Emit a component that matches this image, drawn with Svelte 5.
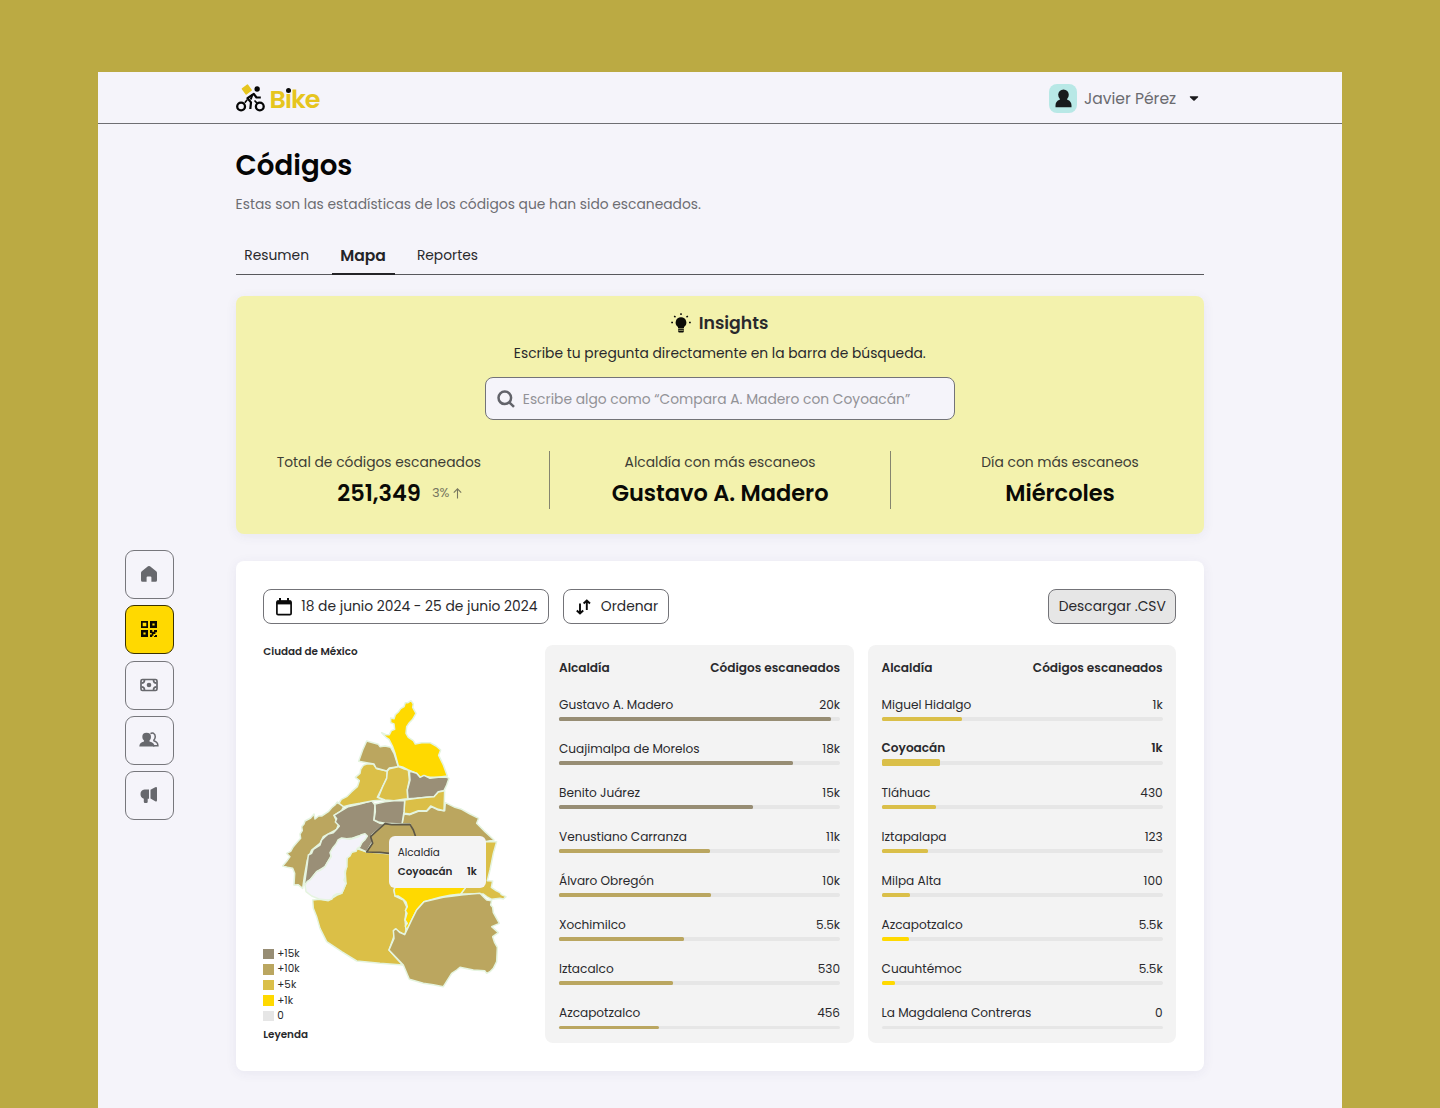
<script>
  const left = [
    { name: 'Gustavo A. Madero', value: '20k', pct: 96.8, tone: 'taupe' },
    { name: 'Cuajimalpa de Morelos', value: '18k', pct: 83.3, tone: 'taupe' },
    { name: 'Benito Juárez', value: '15k', pct: 69, tone: 'taupe' },
    { name: 'Venustiano Carranza', value: '11k', pct: 53.8, tone: 'khaki' },
    { name: 'Álvaro Obregón', value: '10k', pct: 54.2, tone: 'khaki' },
    { name: 'Xochimilco', value: '5.5k', pct: 44.5, tone: 'khaki' },
    { name: 'Iztacalco', value: '530', pct: 40.6, tone: 'khaki' },
    { name: 'Azcapotzalco', value: '456', pct: 35.5, tone: 'khaki' }
  ];
  const right = [
    { name: 'Miguel Hidalgo', value: '1k', pct: 28.5, tone: 'gold' },
    { name: 'Coyoacán', value: '1k', pct: 20.7, tone: 'gold', active: true },
    { name: 'Tláhuac', value: '430', pct: 19.5, tone: 'gold' },
    { name: 'Iztapalapa', value: '123', pct: 16.4, tone: 'gold' },
    { name: 'Milpa Alta', value: '100', pct: 10.1, tone: 'gold' },
    { name: 'Azcapotzalco', value: '5.5k', pct: 9.6, tone: 'yellow' },
    { name: 'Cuauhtémoc', value: '5.5k', pct: 4.8, tone: 'yellow' },
    { name: 'La Magdalena Contreras', value: '0', pct: 0, tone: 'yellow' }
  ];
  const panels = [left, right];
  const legend = [
    { label: '+15k', tone: 'taupe' },
    { label: '+10k', tone: 'khaki' },
    { label: '+5k', tone: 'gold' },
    { label: '+1k', tone: 'yellow' },
    { label: '0', tone: 'none' }
  ];
  const regions = [
    { tone: 'khaki', d: '212,332 205,340 202,336 195,345 185,353 175,365 155,378 146,378 135,387 132,372 122,384 105,393 102,402 95,410 97,422 90,432 92,445 80,458 70,470 62,484 50,490 60,500 50,514 38,528 52,532 68,535 74,550 72,585 84,584 98,595 103,560 112,510 125,480 150,460 160,440 200,418 205,405 192,376 215,362 222,348' },
    { tone: 'gold', d: '262,476 290,485 360,492 390,560 372,600 375,618 400,630 410,650 405,690 408,720 405,735 375,718 370,745 357,780 375,800 398,825 330,820 260,813 215,785 170,755 150,715 140,680 130,655 128,630 150,628 175,632 200,616 215,610 228,580 226,550 232,500 245,487' },
    { tone: 'khaki', d: '396,402 402,372 420,374 445,364 470,364 484,350 505,360 524,362 526,338 555,352 575,358 600,372 626,385 620,400 645,425 672,450 640,456 600,480 440,460 420,402' },
    { tone: 'gold', d: '630,455 680,455 670,490 660,540 652,572 668,573 664,592 678,602 690,608 694,614 708,620 700,627 690,625 665,628 650,620 640,612 600,612 572,612 585,595 600,560' },
    { tone: 'yellow', d: '372,600 380,580 590,580 585,595 572,612 540,616 510,622 462,635 440,660 425,690 410,722 406,708 412,700 405,690 411,670 406,662 412,650 408,636 400,628 384,618 375,618' },
    { tone: 'khaki', d: '462,635 520,622 580,614 630,610 640,620 650,630 665,632 662,645 668,652 670,668 688,700 665,710 685,728 668,740 674,758 682,772 680,815 670,835 660,845 650,850 644,842 610,840 570,832 560,840 545,850 520,890 490,884 460,880 418,868 400,825 357,780 372,745 370,722 378,716 390,728 404,734 425,690 440,660' },
    { tone: 'taupe', d: '192,376 215,362 235,350 270,342 305,332 315,345 312,390 330,400 345,402 325,418 305,435 308,455 290,486 264,474 285,445 265,438 245,445 215,448 205,460 185,480 182,500 165,530 140,545 120,570 103,585 108,550 112,520 115,495 125,490 130,478 150,465 155,450 165,440 175,432 190,428 200,418 208,408 196,396 200,386' },
    { tone: 'clear', d: '105,585 112,574 122,568 130,558 140,545 152,540 165,530 172,518 184,500 180,488 188,474 198,462 204,450 215,444 240,448 265,440 272,435 285,431 292,438 284,450 275,458 270,470 262,475 258,484 245,487 240,498 230,505 231,530 224,545 226,560 222,570 228,580 220,600 215,610 200,612 190,618 185,628 175,630 150,628 125,618 108,605' },
    { tone: 'gold', d: '280,226 290,222 310,222 320,236 352,243 350,265 338,290 322,322 345,330 310,332 270,340 240,345 220,350 207,340 214,328 230,320 245,305 262,290 268,272 256,262 270,250 272,238' },
    { tone: 'khaki', d: '290,153 325,163 330,170 345,168 362,172 372,190 385,230 358,234 350,243 318,234 312,222 290,218 266,214 278,180' },
    { tone: 'gold', d: '352,243 358,236 385,230 400,236 415,240 418,270 412,300 413,326 400,328 372,332 345,330 325,322 338,290 350,265' },
    { tone: 'yellow', d: '335,128 348,134 358,134 364,122 374,118 372,102 362,98 362,84 372,86 376,74 385,66 392,56 402,50 406,38 414,38 423,32 430,42 428,52 438,70 428,88 418,98 410,110 408,130 415,142 430,152 436,162 455,158 480,158 498,168 512,180 506,196 520,225 532,258 505,262 480,262 462,258 450,262 440,250 415,240 400,232 385,228 375,190 368,170 357,148 348,142' },
    { tone: 'taupe', d: '418,243 440,250 450,262 462,256 480,265 505,262 530,262 537,265 530,285 522,302 505,305 492,320 470,322 440,325 414,326 412,300 420,270' },
    { tone: 'gold', d: '404,330 440,325 470,322 492,320 505,306 524,302 522,362 505,358 482,348 470,362 445,362 420,372 402,370' },
    { tone: 'taupe', d: '315,342 345,335 372,332 404,332 402,365 396,402 345,400 325,396 312,390 316,365' },
    { tone: 'khaki', d: '345,401 365,404 420,403 430,420 437,440 437,492 358,490 330,487 290,486 308,460 302,440 318,425', focus: true }
  ];
</script>

<div class="frame">
  <header>
    <div class="logo">
      <svg width="30" height="28" viewBox="0 0 30 28" fill="none" stroke="#050505">
        <rect x="-3.9" y="-3.9" width="7.8" height="7.800" rx=".8" transform="translate(10.800 5.500) rotate(-36)" fill="#e6c51e" stroke="none" />
        <circle cx="5.100" cy="22.500" r="3.900" stroke-width="2.300" />
        <circle cx="23.800" cy="22.500" r="3.900" stroke-width="2.300" />
        <circle cx="21.100" cy="5" r="2.700" fill="#050505" stroke="none" />
        <path d="M24.800 13.500h-4.300l-2.700-3.700-6.300 4.400 3.500 4.200-.7 6.600" stroke-width="2.200" stroke-linejoin="round" />
        <path d="M16.500 10.500l-1.800 5" stroke-width="2" />
        <path d="M11.200 15.800l-2.400 3M18.500 16.500l2.600 2.600" stroke-width="1.600" />
      </svg>
      <span class="word">B<span class="i">ı<i></i></span>ke</span>
    </div>
    <div class="user">
      <span class="avatar">
        <svg width="17" height="19" viewBox="0 0 17 19" fill="#181a1c"><circle cx="8.5" cy="5.7" r="5.3" /><path d="M4.800 8h7.400v2.700c3 .8 4.300 3 4.300 5.700v1.800H.5v-1.800c0-2.700 1.300-4.900 4.300-5.700z" /></svg>
      </span>
      <span class="uname">Javier Pérez</span>
      <svg width="10" height="5" viewBox="0 0 10 5"><path d="M1.200.3h7.600q.8.2.2.9L5.700 4.500q-.7.600-1.400 0L1 1.200Q.4.500 1.200.3z" fill="#1a1a1c" /></svg>
    </div>
  </header>

  <div class="body">
    <nav>
      <button aria-label="Inicio"><svg width="18" height="18" viewBox="0 0 18 18" fill="#67686d"><path d="M8 1.300q1-.8 2 0l6.200 5q.8.600.8 1.600v7.300q0 1.600-1.600 1.600h-4V12.500q0-1-1-1H7.600q-1 0-1 1v4.300h-4Q1 16.800 1 15.200V7.900q0-1 .8-1.600z" /></svg></button>
      <button class="on" aria-label="Códigos"><svg width="16" height="16" viewBox="0 0 16 16" fill="#0c0a00" fill-rule="evenodd"><path d="M0 0h7v7H0zM1.700 1.700v3.600h3.600V1.700zM9 0h7v7H9zM11.400 2.400v2.200h2.200V2.400zM0 9h7v7H0zM2.400 11.400v2.200h2.200v-2.200z" /><path d="M9 9h2.300v1.800H13V9h3v2.200h-1.600V13h-2v1.700h-1.200V16H9v-2.400h1.700V12H9zM14 14h2v2h-3v-1h1z" /></svg></button>
      <button aria-label="Pagos"><svg width="18" height="14" viewBox="0 0 18 14" fill="none" stroke="#67686d" stroke-width="1.700"><rect x="1" y="1.500" width="16" height="11" rx="1.500" /><circle cx="9" cy="7" r="2.300" fill="#67686d" stroke="none" /><path d="M1.500 5.200q3 0 3-3.200M16.500 5.200q-3 0-3-3.200M1.500 8.800q3 0 3 3.200M16.500 8.800q-3 0-3 3.200" stroke-width="1.700" /></svg></button>
      <button aria-label="Usuarios"><svg width="20" height="16" viewBox="0 0 20 16" fill="#67686d"><path d="M11.500 1.600q1.400-1 3-.3 2 1 1.700 3.800-.2 1.800-1.300 2.900v.8q4 1.300 4 4.900H14" fill="none" stroke="#67686d" stroke-width="1.500" /><path d="M7.500.8q4.500 0 4.500 4.200 0 2.300-1.500 3.600v1q5 1.200 5 5H.3q0-3.800 4.700-5v-1Q3.300 7.300 3.300 5q0-4.200 4.200-4.200z" /></svg></button>
      <button aria-label="Campañas"><svg width="18" height="18" viewBox="0 0 18 18" fill="#67686d"><path d="M9 3.500v9.300H7.700v3q0 1.200-1.200 1.200H5q-1.200 0-1.200-1.200v-3Q.5 11.800.5 8.100q0-4 4-4.600zM10.500 3.800l4.700-2.600q1.800-.8 1.800 1v12q0 1.800-1.800 1l-4.700-2.800z" /></svg></button>
    </nav>

    <main>
      <h1>Códigos</h1>
      <p class="lead">Estas son las estadísticas de los códigos que han sido escaneados.</p>
      <div class="tabs">
        <span class="tab t1">Resumen</span>
        <span class="tab sel">Mapa</span>
        <span class="tab t3">Reportes</span>
      </div>

      <section class="insights">
        <h2>
          <svg width="20" height="20" viewBox="0 0 20 20" fill="#0b0b08"><path d="M10 4.200a5.300 5.300 0 0 1 3 9.700V15H7v-1.100a5.300 5.300 0 0 1 3-9.700zM7.200 15.500h5.600v3q0 1-1 1H8.200q-1 0-1-1z" /><path d="M7.500 17.300h5" stroke="#c4c389" stroke-width=".8" /><path d="M10 .3v1.800M3.200 3l1.300 1.300M16.800 3l-1.300 1.300M.2 9.500H2M18 9.500h1.800" stroke="#0b0b08" stroke-width="1.500" /></svg>
          <span>Insights</span>
        </h2>
        <p class="hint">Escribe tu pregunta directamente en la barra de búsqueda.</p>
        <div class="search">
          <svg width="18" height="18" viewBox="0 0 18 18" fill="none" stroke="#62636a" stroke-width="2.500"><circle cx="7.800" cy="7.800" r="6.300" /><path d="M12.300 12.300l4.700 4.500" /></svg>
          <span>Escribe algo como “Compara A. Madero con Coyoacán”</span>
        </div>
        <div class="stats">
          <div class="stat">
            <span class="label">Total de códigos escaneados</span>
            <div class="big"><b class="num">251,349</b><em>3%</em><svg width="9" height="11" viewBox="0 0 9 11" fill="none" stroke="#77775f" stroke-width="1.100"><path d="M4.500 10.500V1M.8 4.700l3.700-3.900 3.700 3.900" /></svg></div>
          </div>
          <div class="stat">
            <span class="label l2">Alcaldía con más escaneos</span>
            <div class="big"><b class="gam">Gustavo A. Madero</b></div>
          </div>
          <div class="stat">
            <span class="label l3">Día con más escaneos</span>
            <div class="big"><b class="day">Miércoles</b></div>
          </div>
        </div>
      </section>

      <section class="card">
        <div class="tools">
          <button class="date">
            <svg width="16" height="18" viewBox="0 0 16 18" fill="none" stroke="#0a0a0a" stroke-width="1.700"><rect x=".9" y="3" width="14.200" height="13.600" rx="1.200" /><path d="M1 4.500h14" stroke-width="3.800" /><path d="M4 0v3M12 0v3" stroke-width="2" /></svg>
            <span>18 de junio 2024 - 25 de junio 2024</span>
          </button>
          <button class="sort">
            <svg width="15" height="16" viewBox="0 0 15 16" fill="none" stroke="#0a0a0a" stroke-width="1.900"><path d="M4 4.500v10M.8 11.500l3.200 3 3.200-3M10.800 11V1.500M7.600 4.500l3.200-3 3.200 3" /></svg>
            <span>Ordenar</span>
          </button>
          <button class="csv"><span>Descargar .CSV</span></button>
        </div>
        <div class="cols">
          <div class="mapcol">
            <h3>Ciudad de México</h3>
            <div class="map">
              <svg width="250" height="310" viewBox="0 0 750 930">
                {#each regions as r}
                  <polygon class="region {r.tone}" class:focus={r.focus} points={r.d} />
                {/each}
              </svg>
              <div class="tip">
                <span>Alcaldía</span>
                <div><b>Coyoacán</b><b>1k</b></div>
              </div>
            </div>
            <div class="legend">
              {#each legend as l}
                <div class="key"><i class={l.tone}></i><span>{l.label}</span></div>
              {/each}
              <b>Leyenda</b>
            </div>
          </div>
          {#each panels as rows}
            <div class="panel">
              <div class="head"><span>Alcaldía</span><span>Códigos escaneados</span></div>
              {#each rows as r}
                <div class="row" class:active={r.active}>
                  <div class="line"><span>{r.name}</span><span>{r.value}</span></div>
                  <div class="track"><div class="bar {r.tone}" style:width="{r.pct}%"></div></div>
                </div>
              {/each}
            </div>
          {/each}
        </div>
      </section>
    </main>
  </div>
</div>

<style>
  :global(body) {
    background: #bbaa43;
    font-family: Poppins, Inter, sans-serif;
    font-feature-settings: 'cv11';
    color: #29292c;
  }
  :global(#app) { height: 1108px; overflow: hidden; }
  * { box-sizing: border-box; }
  h1, h2, h3, p { margin: 0; }
  svg { display: block; flex: none; }
  span, b, h1, h3, p { white-space: nowrap; }
  button { font: inherit; color: inherit; font-feature-settings: inherit; padding: 0; }
  .frame { margin: 72px 98px 0; height: 1036px; background: #f5f4fa; }
  header {
    height: 52px; padding: 1px 138px 0 137.600px; border-bottom: 1px solid #6e6e72;
    display: flex; justify-content: space-between; align-items: center;
  }
  .logo { display: flex; align-items: center; gap: 4px; }
  .word { font-size: 25.500px; font-weight: 600; color: #e6c51e; letter-spacing: -1.150px; line-height: 28px; padding-top: 2px; }
  .i { position: relative; }
  .i i { position: absolute; left: .7px; top: 6.500px; width: 5px; height: 5px; border-radius: 50%; background: #0a0a0a; }
  .user { display: flex; align-items: center; padding-right: 5px; }
  .avatar { width: 28px; height: 29px; border-radius: 8px; background: #b8e8e6; display: grid; place-items: center; }
  .uname { font-size: 15.570px; color: #6b6b70; margin: 0 13px 0 7px; width: 92px; }

  .body { display: flex; }
  nav { width: 137.600px; padding: 426px 0 0 27px; display: flex; flex-direction: column; gap: 6.350px; }
  nav button { width: 49px; height: 49px; border: 1px solid #77777c; border-radius: 9px; background: #f5f4fa; display: grid; place-items: center; }
  nav button svg { margin: 0 1px 1px 0; }
  nav button.on { background: #ffd900; border-color: #3b3200; }

  main { width: 968.400px; }
  h1 { font-size: 27.680px; line-height: 42px; margin-top: 21px; font-weight: 600; color: #050505; }
  .lead { font-size: 13.840px; line-height: 20px; margin-top: 7px; color: #6d6d72; }
  .tabs { margin-top: 23px; height: 38px; border-bottom: 1px solid #58585c; display: flex; }
  .tab { font-size: 13.840px; line-height: 36px; height: 38px; }
  .t1 { width: 96px; padding-left: 8.700px; }
  .sel { width: 63px; text-align: center; font-size: 15.570px; line-height: 37px; font-weight: 600; border-bottom: 2px solid #242427; color: #242427; }
  .t3 { padding-left: 22.300px; }

  .insights { margin-top: 21px; height: 238px; border-radius: 8px; background: #f3f2ad; box-shadow: 0 2px 12px rgba(60, 60, 110, .07); display: flex; flex-direction: column; align-items: center; }
  h2 { margin-top: 15px; height: 24px; display: flex; align-items: center; gap: 7.500px; font-size: 17.300px; font-weight: 600; }
  .hint { margin-top: 8px; font-size: 13.840px; line-height: 20px; }
  .search { margin-top: 14px; width: 470px; height: 43px; border: 1px solid #737378; border-radius: 8px; background: #f5f4fa; display: flex; align-items: center; gap: 8px; padding: 1px 0 0 11px; font-size: 13.840px; color: #929297; }
  .stats { margin-top: 31px; width: 100%; height: 58px; display: grid; grid-template-columns: 314.500px 341px 312.900px; }
  .stat { display: flex; flex-direction: column; align-items: center; border-right: 1px solid #85856f; }
  .stat:first-child { padding-right: 27px; }
  .stat:last-child { padding-left: 25px; border: 0; }
  .label { font-size: 13.840px; line-height: 22px; color: #3d3d35; }
  .big { display: flex; align-items: center; height: 30px; margin-top: 5px; }
  .stat:first-child .big { padding-left: 42px; }
  .big b { font-size: 22.490px; font-weight: 600; color: #0a0a06; }
  .big em { font-style: normal; font-size: 13px; color: #77775f; margin: 0 4px 0 11px; }

  .card { margin-top: 27px; height: 509.500px; border-radius: 8px; background: #fff; padding: 28px 27.700px; box-shadow: 0 2px 12px rgba(60, 60, 110, .07); }
  .tools { display: flex; gap: 14px; }
  .tools button { height: 35px; border: 1px solid #737378; border-radius: 8px; background: #fff; display: flex; align-items: center; font-size: 13.840px; }
  .date { width: 285.500px; padding-left: 12px !important; gap: 9px; }
  .sort { width: 106px; padding-left: 12px !important; gap: 10px; }
  .tools .csv { width: 128px; margin-left: auto; background: #e6e6e6; justify-content: center; }
  .cols { margin-top: 21px; display: grid; grid-template-columns: 268px 308.700px 308.700px; gap: 13.900px; height: 398px; }
  .mapcol { display: grid; grid-template: 45px 353px / 1fr; }
  h3 { font-size: 10.380px; line-height: 14px; font-weight: 600; }
  .map { grid-area: 2 / 1; margin-left: 6.500px; position: relative; width: 250px; height: 310px; }
  .region { stroke: #e5f4df; stroke-width: 4.500px; stroke-linejoin: round; }
  .region.focus { stroke: #5d5747; stroke-width: 5px; }
  .region.taupe { fill: #9a8f77; }
  .region.khaki { fill: #bba65f; }
  .region.gold { fill: #dbbf47; }
  .region.yellow { fill: #ffd900; }
  .region.clear { fill: #f4f3fa; }
  .tip { position: absolute; left: 119px; top: 146px; width: 97px; height: 52px; border-radius: 6px; background: #f4f4f4; padding: 8px 9px; font-size: 10.380px; line-height: 18.500px; }
  .tip span { display: block; }
  .tip div { display: flex; justify-content: space-between; }
  .tip b { font-weight: 600; }
  .legend { grid-area: 2 / 1; align-self: end; font-size: 10.380px; }
  .key { display: flex; align-items: center; gap: 3.500px; height: 15.600px; }
  .key i { width: 10.500px; height: 10.500px; }
  .legend b { display: block; font-size: 10.380px; font-weight: 600; line-height: 16px; margin-top: 3px; }
  .taupe { background: #978d74; }
  .khaki { background: #baa660; }
  .gold { background: #dabf49; }
  .yellow { background: #ffd900; }
  .none { background: #e6e6e6; }
  .panel { background: #f3f3f3; border-radius: 8px; padding: 12.500px 13.800px 0; height: 398px; }
  .head { display: flex; justify-content: space-between; font-size: 12.110px; font-weight: 600; line-height: 20px; margin-bottom: 17px; }
  .row { height: 44.080px; font-size: 12.110px; }
  .line { display: flex; justify-content: space-between; line-height: 20px; height: 22.500px; }
  .track { height: 3.500px; border-radius: 2px; background: #e6e6e6; display: flex; align-items: center; }
  .bar { height: 3.500px; border-radius: 1.500px; flex: none; }
  .active { font-weight: 600; }
  .active .line { line-height: 17px; }
  .active .bar { height: 7px; }
</style>
